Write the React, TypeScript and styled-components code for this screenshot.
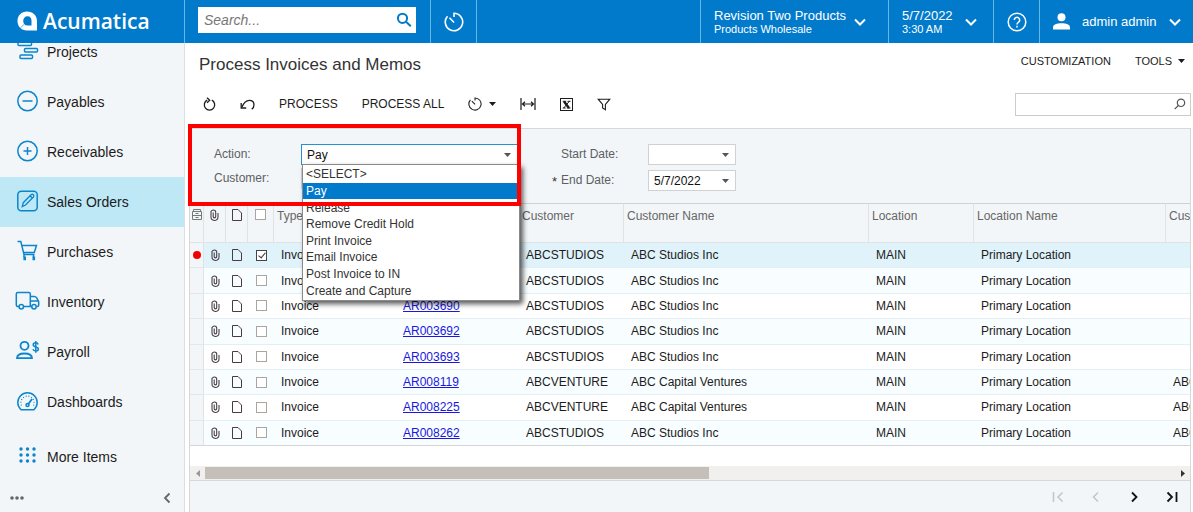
import React from 'react';
import styled, { createGlobalStyle, css } from 'styled-components';

const BLUE = '#027acc';
const ICON_BLUE = '#0b86cc';
const PANEL = '#f3f6f8';
const LINE = '#d6d9dc';

const GlobalStyle = createGlobalStyle`
  * { box-sizing: border-box; }
  body {
    margin: 0;
    background: #fff;
    color: #1c1c1c;
    font: 12px/16px "Liberation Sans", Arial, sans-serif;
  }
  button, input, select { font: inherit; color: inherit; }
  button { border: 0; padding: 0; background: none; cursor: pointer; }
  svg { display: block; flex: none; }
`;

const App = styled.div`
  display: flex;
  flex-direction: column;
  height: 100vh;
  overflow: hidden;
`;

/* Top bar */
const TopBar = styled.header`
  display: flex;
  flex: none;
  height: 43px;
  background: ${BLUE};
  color: #fff;
`;

const Brand = styled.a`
  display: flex;
  align-items: center;
  gap: 6px;
  width: 185px;
  padding: 0 0 2px 17px;
  border-right: 1px solid #62b8e6;
  color: #fff;
  font: 600 21px/28px "Open Sans", "Noto Sans", sans-serif;
  text-decoration: none;
`;

const GlobalSearch = styled.label`
  display: flex;
  align-items: center;
  width: 218px;
  height: 26px;
  margin: 7px 14px 0 13px;
  padding: 0 4px 0 6px;
  background: #fff;
  color: ${BLUE};
`;

const GlobalSearchInput = styled.input`
  flex: 1;
  min-width: 0;
  border: 0;
  padding: 0;
  outline: 0;
  background: none;
  font-size: 14px;
  &::placeholder { color: #777; font-style: italic; opacity: 1; }
`;

const BarButton = styled.button<{ $width: number; $pad?: number }>`
  display: flex;
  align-items: center;
  justify-content: ${p => (p.$pad ? 'flex-start' : 'center')};
  width: ${p => p.$width}px;
  padding-left: ${p => p.$pad ?? 0}px;
  border-left: 1px solid #62b8e6;
  text-align: left;
  font-size: 13px;
`;

const BarSpacer = styled.div`
  flex: 1;
  border-left: 1px solid #62b8e6;
`;

const BarText = styled.span<{ $gap: number; $indent?: number }>`
  display: flex;
  flex-direction: column;
  margin: 0 ${p => p.$gap}px 0 ${p => p.$indent ?? 0}px;
  line-height: 14px;
  white-space: nowrap;
  small { font-size: 11px; line-height: 12px; }
`;

/* Side bar */
const Body = styled.div`
  display: flex;
  flex: 1;
  min-height: 0;
`;

const SideBar = styled.nav`
  display: flex;
  flex-direction: column;
  flex: none;
  width: 185px;
  background: ${PANEL};
  border-right: 1px solid #dcdfe1;
`;

const Modules = styled.div`
  display: flex;
  flex: 1;
  flex-direction: column;
  justify-content: flex-end;
  min-height: 0;
  overflow: hidden;
`;

const ModuleLink = styled.a<{ $active?: boolean; $tall?: boolean }>`
  display: flex;
  align-items: center;
  flex: none;
  gap: 7px;
  height: ${p => (p.$tall ? 60 : 50)}px;
  padding-left: 15px;
  background: ${p => (p.$active ? '#bfe8f6' : 'transparent')};
  color: #1c1c1c;
  font-size: 14px;
  text-decoration: none;
  svg { color: ${ICON_BLUE}; margin-bottom: 2px; }
`;

const SideFooter = styled.div`
  display: flex;
  align-items: center;
  justify-content: space-between;
  height: 25px;
  padding: 0 13px 4px 9px;
  color: #666;
`;

/* Main area */
const Main = styled.main`
  display: flex;
  flex: 1;
  flex-direction: column;
  min-width: 0;
  padding: 0 2px 0 4px;
`;

const TitleRow = styled.div`
  display: flex;
  align-items: center;
  gap: 24px;
  height: 43px;
  padding: 0 6px 0 10px;
`;

const Title = styled.h1`
  flex: 1;
  margin: 0;
  font-size: 17px;
  line-height: 20px;
  font-weight: 400;
  color: #333;
`;

const MenuButton = styled.button`
  display: flex;
  align-items: center;
  gap: 6px;
  font-size: 11px;
  margin-bottom: 8px;
`;

const ToolBar = styled.div`
  display: flex;
  align-items: center;
  height: 42px;
  padding: 0 0 6px 13px;
  gap: 24px;
`;

const ToolButton = styled.button`
  display: flex;
  align-items: center;
  gap: 7px;
  font-size: 12px;
  white-space: nowrap;
`;

const QuickSearch = styled.label`
  display: flex;
  align-items: center;
  width: 176px;
  height: 23px;
  margin-left: auto;
  padding: 0 4px;
  border: 1px solid #ccc;
  color: #555;
  input { flex: 1; min-width: 0; border: 0; outline: 0; padding: 0; background: none; }
`;

const Panel = styled.section`
  position: relative;
  display: flex;
  flex: 1;
  flex-direction: column;
  min-height: 0;
  border: 1px solid ${LINE};
  border-bottom: 0;
  background: ${PANEL};
`;

const Filters = styled.form`
  display: flex;
  flex: none;
  gap: 43px;
  height: 74px;
  padding: 15px 0 0 24px;
`;

const FilterColumn = styled.div<{ $gap: number }>`
  display: flex;
  flex-direction: column;
  gap: ${p => p.$gap}px;
`;

const FilterRow = styled.div<{ $required?: boolean }>`
  position: relative;
  display: flex;
  align-items: center;
  height: 21px;
  label { width: 87px; padding-bottom: 2px; color: #5c6064; }
  ${p => p.$required && css`
    &::before {
      content: '*';
      position: absolute;
      left: -9px;
      top: 4px;
      color: #333;
      font-size: 13px;
    }
  `}
`;

const Field = styled.div<{ $width: number; $focus?: boolean }>`
  position: relative;
  display: flex;
  align-items: center;
  width: ${p => p.$width}px;
  height: 21px;
  padding-right: 6px;
  border: 1px solid ${p => (p.$focus ? '#2693cf' : '#cfd2d4')};
  background: #fff;
  color: #555;
`;

const fieldControl = css`
  flex: 1;
  min-width: 0;
  height: 19px;
  padding: 0 5px;
  border: 0;
  outline: 0;
  background: none;
  color: #111;
`;

const FieldInput = styled.input`${fieldControl}`;
const FieldSelect = styled.select`
  ${fieldControl}
  appearance: none;
`;

const OptionList = styled.ul`
  position: absolute;
  z-index: 2;
  top: 19px;
  left: 0;
  display: flex;
  flex-direction: column;
  width: 218px;
  height: 137px;
  margin: 0;
  padding: 1px 0;
  border: 1px solid #8a8a8a;
  background: #fff;
  box-shadow: 3px 3px 5px rgba(0, 0, 0, 0.65);
  color: #333;
  list-style: none;
`;

const Option = styled.li<{ $selected: boolean }>`
  display: flex;
  flex: 1;
  align-items: center;
  padding-left: 3px;
  background: ${p => (p.$selected ? BLUE : 'transparent')};
  color: ${p => (p.$selected ? '#fff' : 'inherit')};
`;

const Highlight = styled.div`
  position: absolute;
  z-index: 3;
  top: -5px;
  left: -2px;
  width: 333px;
  height: 82px;
  border: 4px solid #fe0000;
  pointer-events: none;
`;

/* Grid */
const GridArea = styled.div`
  flex: 1;
  min-height: 0;
  overflow: hidden;
  background: #fff;
`;

const Grid = styled.table`
  width: 1127px;
  height: 243px;
  table-layout: fixed;
  border-collapse: separate;
  border-spacing: 0;
`;

const HeadCell = styled.th<{ $icon?: boolean }>`
  height: 40px;
  padding: ${p => (p.$icon ? '5px 0 0' : '4px 0 0 3px')};
  border-top: 1px solid #cfd2d4;
  border-bottom: 1px solid #dfe3e5;
  border-right: 1px solid #dfe3e5;
  background: ${PANEL};
  color: #666;
  font-weight: 400;
  text-align: left;
  vertical-align: top;
  white-space: nowrap;
  svg, input { margin: 0 auto; }
`;

const Row = styled.tr<{ $active: boolean }>`
  background: ${p => (p.$active ? '#e0f2fa' : '#fff')};
  &:nth-child(even) { background: #f8fdff; }
  &:last-child td { border-bottom-color: #d3d6d8; }
`;

const Cell = styled.td<{ $icon?: boolean; $marker?: boolean }>`
  padding: ${p => (p.$icon ? '0' : '0 0 0 7px')};
  border-bottom: 1px solid #e2f0f6;
  white-space: nowrap;
  ${p => p.$marker && css`
    background: ${PANEL};
    border-right: 1px solid #dfe3e5;
    border-bottom-color: #e3e7e9;
  `}
  svg, input { margin: 0 auto; }
  a { color: #1818e0; }
`;

const Tick = styled.input`
  position: relative;
  display: block;
  appearance: none;
  width: 11px;
  height: 11px;
  border: 1px solid #aaa59f;
  background: #fff;
  &:checked { border-color: #444; }
  &:checked::after {
    content: '';
    position: absolute;
    left: 3px;
    top: 0;
    width: 3px;
    height: 6px;
    border: solid #333;
    border-width: 0 1px 1px 0;
    transform: rotate(40deg);
  }
`;

const ScrollBar = styled.div`
  display: flex;
  flex: none;
  align-items: center;
  height: 14px;
  background: #f1f0ef;
  button { display: flex; justify-content: center; width: 15px; }
`;

const ScrollTrack = styled.div`
  flex: 1;
  height: 12px;
`;

const ScrollThumb = styled.div`
  width: 52%;
  height: 12px;
  background: #c4c0b9;
`;

const Pager = styled.footer`
  display: flex;
  flex: none;
  align-items: center;
  justify-content: flex-end;
  gap: 26px;
  height: 32px;
  padding-right: 12px;
  border-top: 1px solid ${LINE};
`;

const PageButton = styled.button`
  color: #111;
  &:disabled { color: #c4c7c9; }
`;

/* Icons */
const Svg = ({ w, h = w, vb, sw = 1.5, children }: {
  w: number; h?: number; vb?: string; sw?: number; children: React.ReactNode;
}) => (
  <svg width={w} height={h} viewBox={vb ?? `0 0 ${w} ${h}`} fill="none" stroke="currentColor" strokeWidth={sw} aria-hidden="true">
    {children}
  </svg>
);

const LogoMark = () => (
  <svg width="20" height="20" viewBox="0 0 20 20" aria-hidden="true">
    <path fill="#fff" fillRule="evenodd" d="M10 .5C15.800 .5 20 4.600 20 10V19.500H10C4.400 19.500.5 15.400.5 10S4.400.5 10 .5ZM10.400 5.300A4.300 4.500 0 0 0 6.200 9.900c0 2.500 1.700 4.500 4.200 4.500H14.500v-4.500a4.300 4.500 0 0 0-4.100-4.600Z" />
    <path stroke={BLUE} strokeWidth=".6" d="m3.200 17.200 3.800-3.800" />
  </svg>
);

const ChevronDown = () => <Svg w={12} h={8} sw={2}><path d="m1 1.5 5 5 5-5" /></Svg>;
const Caret = () => <svg width="7" height="4" viewBox="0 0 7 4" aria-hidden="true"><path fill="currentColor" d="M0 0h7L3.5 4z" /></svg>;
const SearchBold = () => <Svg w={16} sw={2}><circle cx="6.500" cy="6.300" r="4.600" /><path d="m10 9.800 4.800 4.500" /></Svg>;
const SearchThin = () => <Svg w={12} sw={1.2}><circle cx="7" cy="4.800" r="3.700" /><path d="m4.300 7.500-3.600 3.600" /></Svg>;
const Clock = ({ size, sw }: { size: number; sw: number }) => (
  <Svg w={size} vb="0 0 20 20" sw={sw}>
    <path d="M10 5V1.300A8.700 8.700 0 1 1 3.500 4.200M5.500 5.800l4.600 4.700" />
  </Svg>
);
const Help = () => (
  <Svg w={20} sw={1.5}>
    <circle cx="10" cy="10" r="8.800" />
    <path d="M7.300 8a2.700 2.700 0 1 1 4.300 2.200c-1 .7-1.600 1.200-1.600 2.300M10 13.800v1.700" />
  </Svg>
);
const Person = () => (
  <svg width="17" height="17" viewBox="0 0 17 17" aria-hidden="true">
    <circle cx="8.500" cy="4.200" r="4" fill="#fff" /><path fill="#fff" d="M0 16.500v-2.200C0 11.500 4 10.200 8.500 10.200S17 11.500 17 14.300v2.200z" />
  </svg>
);

const ModuleIcon = ({ children }: { children: React.ReactNode }) => <Svg w={25} h={24}>{children}</Svg>;

const projects = <ModuleIcon><rect x="3" y="3" width="13.500" height="3.500" rx="1" /><rect x="9.500" y="9.500" width="13" height="3.500" rx="1" /><rect x="5" y="16" width="12.500" height="3.500" rx="1" /></ModuleIcon>;
const payables = <ModuleIcon><circle cx="12.500" cy="12" r="9.700" /><path d="M7.500 12h10" /></ModuleIcon>;
const receivables = <ModuleIcon><circle cx="12.500" cy="12" r="9.700" /><path d="M8.500 12h8M12.500 8v8" /></ModuleIcon>;
const salesOrders = <ModuleIcon><rect x="2.800" y="2.300" width="19.400" height="19.400" rx="3.500" /><path strokeWidth="1.300" d="m7.300 17.500 1-3.800 7.800-7.900c.8-.8 1.700-.7 2.300-.1.700.7.700 1.500 0 2.300l-7.900 8zM15.300 7l2.200 2.200" /></ModuleIcon>;
const purchases = <ModuleIcon><path d="M2.500 2.500h3.300l3.200 13h10.500M6.800 6.500h14.700l-2.200 7H8.700M9 15.500v2.700M18.500 15.500v2.700" /><path d="M9.700 17.500v3.700M18.800 17.500v3.700" strokeWidth="2.600" /></ModuleIcon>;
const inventory = <ModuleIcon><path d="M4 17.500H2.800c-1 0-1.500-.6-1.500-1.500V5c0-1 .6-1.500 1.500-1.500h11c1 0 1.500.6 1.500 1.500v12.500H8.500M15.300 7.500h4c1 0 1.700.4 2.200 1.200l1.600 2.800c.4.600.6 1 .6 1.700v2.800c0 1-.5 1.500-1.500 1.500h-.5M15.300 12h8M15.300 17.500h1.800" /><circle cx="6.300" cy="17.800" r="2.200" /><circle cx="19" cy="17.800" r="2.200" /></ModuleIcon>;
const payroll = <ModuleIcon><circle cx="9.500" cy="6.800" r="4" strokeWidth="1.800" /><path strokeWidth="1.800" d="M2 19.200c0-3 2.500-4.700 7.500-4.700s7.500 1.700 7.500 4.700z" /><path d="M23.200 5.500c-.3-1.200-1.300-1.700-2.500-1.700-1.500 0-2.500.8-2.500 2 0 3 5.200 1.300 5.200 4.300 0 1.200-1 2-2.600 2-1.400 0-2.500-.6-2.800-1.900M20.800 2v11.800" /></ModuleIcon>;
const dashboards = <ModuleIcon><path d="M6 20.700a9.700 9.700 0 1 1 13 0z" /><path d="M6.500 16.500a6.600 6.600 0 1 1 12 0" strokeWidth="1.200" strokeDasharray="1 1.800" /><path d="m13 15.500 4-5.500" strokeWidth="1.800" /><circle cx="12.500" cy="16" r="1.500" /></ModuleIcon>;
const moreItems = (
  <ModuleIcon>
    {[5, 11, 17].map(y => [6, 12.5, 19].map(x => <circle key={`${x}-${y}`} cx={x} cy={y} r="1.700" fill="currentColor" stroke="none" />))}
  </ModuleIcon>
);

const Refresh = () => <Svg w={14} sw={1.3}><path d="M9.800 3.200a5.200 5.200 0 1 1-4.600 0" /><path d="M5 .800 7.700 3.300 5 5.800" /></Svg>;
const Undo = () => <Svg w={15} h={13} sw={1.3}><path d="M2 9C4 4.300 6.500 2.300 9.300 2.300c3 0 4.700 2 4.700 4.500 0 2-.8 3.500-2.300 4.500" /><path d="M1.200 5v5h5" /></Svg>;
const FitWidth = () => <Svg w={16} h={14} sw={1.2}><path d="M1 1v12M15 1v12M2.500 7h11M5 4.700 2.500 7 5 9.300M11 4.700 13.500 7 11 9.300" /></Svg>;
const Excel = () => <Svg w={13} sw={1}><rect x=".5" y=".5" width="12" height="12" /><path d="m4 3.500 5 6.500" strokeWidth="2.400" /><path d="M9.300 3.300 3.700 10M2.700 3.300h3.500M7.500 3.300h3M2.700 10h3M6.800 10h3.700" /></Svg>;
const Funnel = () => <Svg w={14} h={13} sw={1.1}><path d="M1.200 1.200h11.600L8.400 6.500v5.300l-2.800-1.900V6.500z" /></Svg>;

const Cabinet = () => <Svg w={10} h={11} sw={1}><g stroke="#777"><path d="M1.500 3V.5h7V3M.5 2.500h9v8h-9zM.5 6.500h9M3.500 4.500h3M3.500 8.500h3" /></g></Svg>;
const Clip = () => <Svg w={9} h={12} sw={1.1}><path stroke="#4a4248" d="M1 2v5.800a3.500 3.500 0 0 0 7 .3V4M1 3.300C1 .2 5.700.2 5.700 3.300v4.200c0 1.800-2.500 1.800-2.500 0V3.500" /></Svg>;
const Doc = () => <Svg w={10} h={12} sw={1}><path stroke="#4a3a44" d="M.5.5h5.500L9.500 4v7.500h-9z" /></Svg>;
const ArrowLeft = () => <svg width="4" height="7" viewBox="0 0 4 7" aria-hidden="true"><path fill="#999" d="M4 0v7L0 3.500z" /></svg>;
const ArrowRight = () => <svg width="4" height="7" viewBox="0 0 4 7" aria-hidden="true"><path fill="#333" d="M0 0v7l4-3.500z" /></svg>;

const modules = [
  { name: 'Projects', icon: projects },
  { name: 'Payables', icon: payables },
  { name: 'Receivables', icon: receivables },
  { name: 'Sales Orders', icon: salesOrders, active: true },
  { name: 'Purchases', icon: purchases },
  { name: 'Inventory', icon: inventory },
  { name: 'Payroll', icon: payroll },
  { name: 'Dashboards', icon: dashboards },
];

const actions = ['<SELECT>', 'Pay', 'Release', 'Remove Credit Hold', 'Print Invoice', 'Email Invoice', 'Post Invoice to IN', 'Create and Capture'];

const columnWidths = [14, 22, 22, 26, 122, 123, 105, 245, 105, 192, 151];

const studios = { customer: 'ABCSTUDIOS', name: 'ABC Studios Inc' };
const ventures = { customer: 'ABCVENTURE', name: 'ABC Capital Ventures' };
const invoices = [
  { ref: '', ...studios, extra: '' },
  { ref: '', ...studios, extra: '' },
  { ref: 'AR003690', ...studios, extra: '' },
  { ref: 'AR003692', ...studios, extra: '' },
  { ref: 'AR003693', ...studios, extra: '' },
  { ref: 'AR008119', ...ventures, extra: 'ABC' },
  { ref: 'AR008225', ...ventures, extra: 'ABC' },
  { ref: 'AR008262', ...studios, extra: 'ABC' },
];

export default function ProcessInvoices() {
  return (
    <App>
      <GlobalStyle />
      <TopBar>
        <Brand href="#"><LogoMark />Acumatica</Brand>
        <GlobalSearch>
          <GlobalSearchInput placeholder="Search..." aria-label="Search" />
          <SearchBold />
        </GlobalSearch>
        <BarButton $width={46} aria-label="Recent"><Clock size={20} sw={1.6} /></BarButton>
        <BarSpacer />
        <BarButton $width={188} $pad={13}>
          <BarText $gap={8}>Revision Two Products<small>Products Wholesale</small></BarText>
          <ChevronDown />
        </BarButton>
        <BarButton $width={105} $pad={13}>
          <BarText $gap={12}>5/7/2022<small>3:30 AM</small></BarText>
          <ChevronDown />
        </BarButton>
        <BarButton $width={46} aria-label="Help"><Help /></BarButton>
        <BarButton $width={154} $pad={13}>
          <Person />
          <BarText $gap={13} $indent={12}>admin admin</BarText>
          <ChevronDown />
        </BarButton>
      </TopBar>

      <Body>
        <SideBar>
          <Modules>
            {modules.map(m => (
              <ModuleLink key={m.name} href="#" $active={m.active}>{m.icon}{m.name}</ModuleLink>
            ))}
          </Modules>
          <ModuleLink href="#" $tall>{moreItems}More Items</ModuleLink>
          <SideFooter>
            <button aria-label="Menu options">
              <svg width="16" height="4" viewBox="0 0 16 4"><g fill="currentColor"><circle cx="3" cy="2" r="1.800" /><circle cx="8" cy="2" r="1.800" /><circle cx="13" cy="2" r="1.800" /></g></svg>
            </button>
            <button aria-label="Collapse"><Svg w={8} h={12} sw={1.8}><path d="M6.500 1.500 2 6l4.500 4.500" /></Svg></button>
          </SideFooter>
        </SideBar>

        <Main>
          <TitleRow>
            <Title>Process Invoices and Memos</Title>
            <MenuButton>CUSTOMIZATION</MenuButton>
            <MenuButton>TOOLS <Caret /></MenuButton>
          </TitleRow>
          <ToolBar>
            <ToolButton aria-label="Refresh"><Refresh /></ToolButton>
            <ToolButton aria-label="Undo"><Undo /></ToolButton>
            <ToolButton>PROCESS</ToolButton>
            <ToolButton>PROCESS ALL</ToolButton>
            <ToolButton aria-label="Schedules"><Clock size={14} sw={1.5} /><Caret /></ToolButton>
            <ToolButton aria-label="Fit to screen"><FitWidth /></ToolButton>
            <ToolButton aria-label="Export to Excel"><Excel /></ToolButton>
            <ToolButton aria-label="Filter"><Funnel /></ToolButton>
            <QuickSearch><input aria-label="Find in table" /><SearchThin /></QuickSearch>
          </ToolBar>

          <Panel>
            <Filters>
              <FilterColumn $gap={3}>
                <FilterRow>
                  <label htmlFor="action">Action:</label>
                  <Field $width={217} $focus>
                    <FieldSelect id="action" defaultValue="Pay">
                      {actions.map(a => <option key={a}>{a}</option>)}
                    </FieldSelect>
                    <Caret />
                    <OptionList>
                      {actions.map(a => <Option key={a} $selected={a === 'Pay'}>{a}</Option>)}
                    </OptionList>
                  </Field>
                </FilterRow>
                <FilterRow>
                  <label htmlFor="customer">Customer:</label>
                  <Field $width={217}><FieldInput id="customer" /></Field>
                </FilterRow>
              </FilterColumn>
              <FilterColumn $gap={5}>
                <FilterRow>
                  <label htmlFor="start">Start Date:</label>
                  <Field $width={88}><FieldInput id="start" /><Caret /></Field>
                </FilterRow>
                <FilterRow $required>
                  <label htmlFor="end">End Date:</label>
                  <Field $width={88}><FieldInput id="end" defaultValue="5/7/2022" /><Caret /></Field>
                </FilterRow>
              </FilterColumn>
            </Filters>
            <Highlight />

            <GridArea>
              <Grid>
                <colgroup>{columnWidths.map((w, i) => <col key={i} width={w} />)}</colgroup>
                <thead>
                  <tr>
                    <HeadCell $icon><Cabinet /></HeadCell>
                    <HeadCell $icon><Clip /></HeadCell>
                    <HeadCell $icon><Doc /></HeadCell>
                    <HeadCell $icon><Tick type="checkbox" aria-label="Select all" /></HeadCell>
                    <HeadCell>Type</HeadCell>
                    <HeadCell />
                    <HeadCell>Customer</HeadCell>
                    <HeadCell>Customer Name</HeadCell>
                    <HeadCell>Location</HeadCell>
                    <HeadCell>Location Name</HeadCell>
                    <HeadCell>Customer</HeadCell>
                  </tr>
                </thead>
                <tbody>
                  {invoices.map((inv, i) => (
                    <Row key={i} $active={i === 0}>
                      <Cell $icon $marker>{i === 0 && <svg width="8" height="8" viewBox="0 0 8 8"><circle cx="4" cy="4" r="4" fill="#f00000" /></svg>}</Cell>
                      <Cell $icon><Clip /></Cell>
                      <Cell $icon><Doc /></Cell>
                      <Cell $icon><Tick type="checkbox" defaultChecked={i === 0} aria-label="Select row" /></Cell>
                      <Cell>Invoice</Cell>
                      <Cell>{inv.ref && <a href="#">{inv.ref}</a>}</Cell>
                      <Cell>{inv.customer}</Cell>
                      <Cell>{inv.name}</Cell>
                      <Cell>MAIN</Cell>
                      <Cell>Primary Location</Cell>
                      <Cell>{inv.extra}</Cell>
                    </Row>
                  ))}
                </tbody>
              </Grid>
            </GridArea>
            <ScrollBar>
              <button aria-label="Scroll left"><ArrowLeft /></button>
              <ScrollTrack><ScrollThumb /></ScrollTrack>
              <button aria-label="Scroll right"><ArrowRight /></button>
            </ScrollBar>
            <Pager>
              <PageButton disabled aria-label="First page"><Svg w={12} sw={1.6}><path d="M1.500 1v10M10.500 1.500 6 6l4.500 4.500" /></Svg></PageButton>
              <PageButton disabled aria-label="Previous page"><Svg w={12} sw={1.6}><path d="M8 1.500 3.500 6 8 10.500" /></Svg></PageButton>
              <PageButton aria-label="Next page"><Svg w={12} sw={1.8}><path d="M4 1.500 8.500 6 4 10.500" /></Svg></PageButton>
              <PageButton aria-label="Last page"><Svg w={12} sw={1.8}><path d="M1.500 1.500 6 6l-4.500 4.500M10.500 1v10" /></Svg></PageButton>
            </Pager>
          </Panel>
        </Main>
      </Body>
    </App>
  );
}
